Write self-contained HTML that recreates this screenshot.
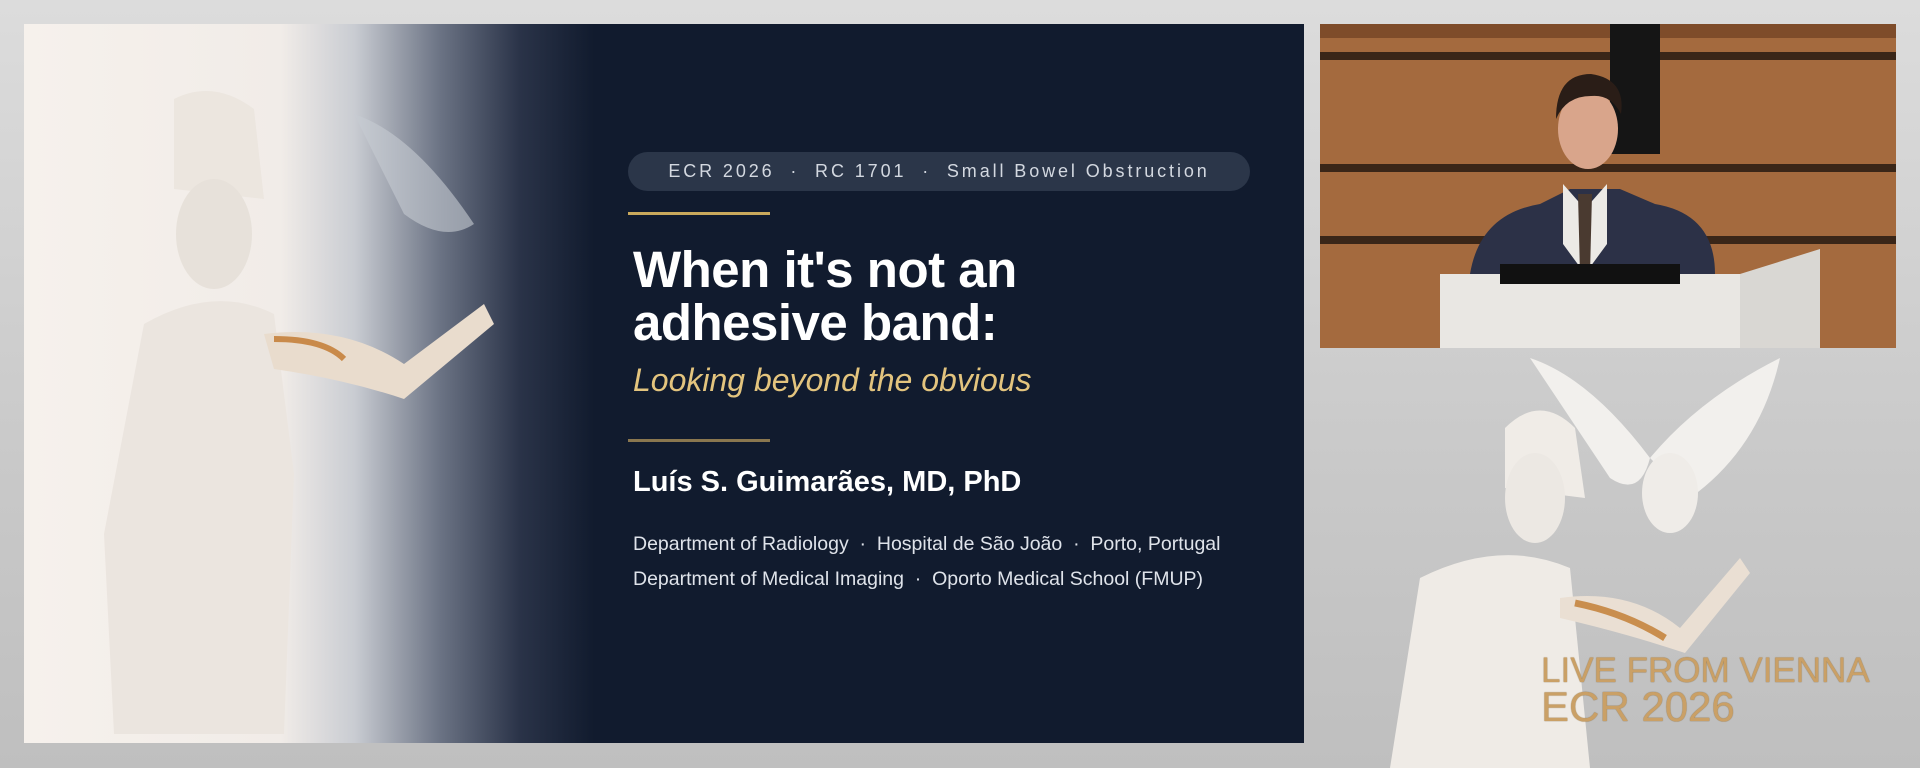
<!DOCTYPE html>
<html><head><meta charset="utf-8"><style>
*{margin:0;padding:0;box-sizing:border-box}
body{width:1920px;height:768px;overflow:hidden;background:linear-gradient(180deg,#dcdcdc,#c9c9c9 60%,#bfbfbf);font-family:"Liberation Sans",sans-serif;position:relative}
.slide{position:absolute;left:24px;top:24px;width:1280px;height:719px;background:#111b2e;overflow:hidden}
.fade{position:absolute;left:0;top:0;width:570px;height:719px;background:linear-gradient(90deg,#f6f1ec 0%,#f1ece8 45%,#c9ccd2 58%,#6b7384 73%,#2a3348 87%,#111b2e 100%)}
.pill{position:absolute;left:604px;top:128px;width:622px;height:39px;border-radius:20px;background:#2b3649;color:#d3d8e0;font-size:18px;letter-spacing:2.9px;line-height:39px;text-align:center}
.gl{position:absolute;left:604px;width:142px;height:3px;background:#c9a95c}
.t{position:absolute;left:609px;color:#fff;font-weight:bold;font-size:51px;line-height:54px;letter-spacing:-0.5px}
.sub{position:absolute;left:609px;top:338px;color:#e3c47e;font-style:italic;font-size:32px}
.name{position:absolute;left:609px;top:442px;color:#fff;font-weight:bold;font-size:29px}
.aff{position:absolute;left:609px;color:#dfe3ea;font-size:19.5px}
.video{position:absolute;left:1320px;top:24px;width:576px;height:324px;background:#9a6238;overflow:hidden}
.gold{position:absolute;color:#caa066;text-shadow:0 0 1px #7a5a2a}
</style></head><body>
<div class="slide">
 <div class="fade"></div>
 <svg width="600" height="719" style="position:absolute;left:0;top:0">
  <path d="M150 75 q40-20 80 10 l10 90 -90 -10z" fill="#ece6df"/>
  <ellipse cx="190" cy="210" rx="38" ry="55" fill="#e7e1da"/>
  <path d="M120 300 q70-40 130-10 l20 160 -10 260 h-170 l-10-200z" fill="#ebe5df"/>
  <path d="M240 310 q80-10 140 30 l80-60 10 20 -90 75 q-60-20-130-30z" fill="#e9dccd"/>
  <path d="M250 315 q50 0 70 20" stroke="#c98a4a" stroke-width="6" fill="none"/>
  <path d="M330 90 q60 20 120 110 q-30 20-70-10z" fill="#c7cbd2" opacity=".6"/>
 </svg>
 <div class="pill">ECR 2026 &nbsp;·&nbsp; RC 1701 &nbsp;·&nbsp; Small Bowel Obstruction</div>
 <div class="gl" style="top:188px"></div>
 <div class="t" style="top:219px">When it's not an</div>
 <div class="t" style="top:272px">adhesive band:</div>
 <div class="sub">Looking beyond the obvious</div>
 <div class="gl" style="top:415px;background:#8a774f"></div>
 <div class="name">Luís S. Guimarães, MD, PhD</div>
 <div class="aff" style="top:509px">Department of Radiology &nbsp;·&nbsp; Hospital de São João &nbsp;·&nbsp; Porto, Portugal</div>
 <div class="aff" style="top:544px">Department of Medical Imaging &nbsp;·&nbsp; Oporto Medical School (FMUP)</div>
</div>
<div class="video">
 <svg width="576" height="324">
  <rect width="576" height="324" fill="#a46a3e"/>
  <rect y="0" width="576" height="14" fill="#7e4c2a"/>
  <rect y="28" width="576" height="8" fill="#3a2618"/>
  <rect y="140" width="576" height="8" fill="#3a2618"/>
  <rect y="212" width="576" height="8" fill="#3a2618"/>
  <rect x="290" y="0" width="50" height="130" fill="#151515"/>
  <path d="M150 250 q10-60 70-70 l30-15 50 0 35 15 q60 10 60 70 v74 h-245z" fill="#2c3147"/>
  <path d="M243 160 l22 25 22-25 0 60 -22 30 -22-30z" fill="#eceae6"/>
  <path d="M258 170 h14 l-2 80 -5 10 -5-10z" fill="#4a3a30"/>
  <ellipse cx="268" cy="105" rx="30" ry="40" fill="#d9a58b"/>
  <path d="M236 95 q0-45 35-45 q35 5 30 40 q-10-20-30-18 q-25 0-35 23z" fill="#2a1d17"/>
  <rect x="120" y="250" width="300" height="74" fill="#e9e7e3"/>
  <rect x="180" y="240" width="180" height="20" fill="#111"/>
  <path d="M420 250 l80-25 v99 h-80z" fill="#d9d7d3"/>
 </svg>
</div>
<svg width="600" height="420" style="position:absolute;left:1320px;top:348px">
 <path d="M185 80 q35-35 70 0 l10 70 -80 -10z" fill="#f0ece7"/>
 <ellipse cx="215" cy="150" rx="30" ry="45" fill="#ece8e3"/>
 <path d="M100 230 q80-40 150-10 l20 200 h-200z" fill="#efebe6"/>
 <path d="M240 250 q70-10 120 30 l60-70 10 15 -65 80 q-60-20-125-35z" fill="#eadfd3"/>
 <path d="M255 255 q50 10 90 35" stroke="#c98e4e" stroke-width="7" fill="none"/>
 <path d="M210 10 q60 20 120 100 q-10 40-40 20z" fill="#f2f0ed"/>
 <path d="M330 110 q50-60 130-100 q-20 90-90 140z" fill="#f2f0ed"/>
 <ellipse cx="350" cy="145" rx="28" ry="40" fill="#efece8"/>
</svg>
<div class="gold" style="left:1541px;top:651px;font-size:35px">LIVE FROM VIENNA</div>
<div class="gold" style="left:1541px;top:683px;font-size:42px">ECR 2026</div>
</body></html>
